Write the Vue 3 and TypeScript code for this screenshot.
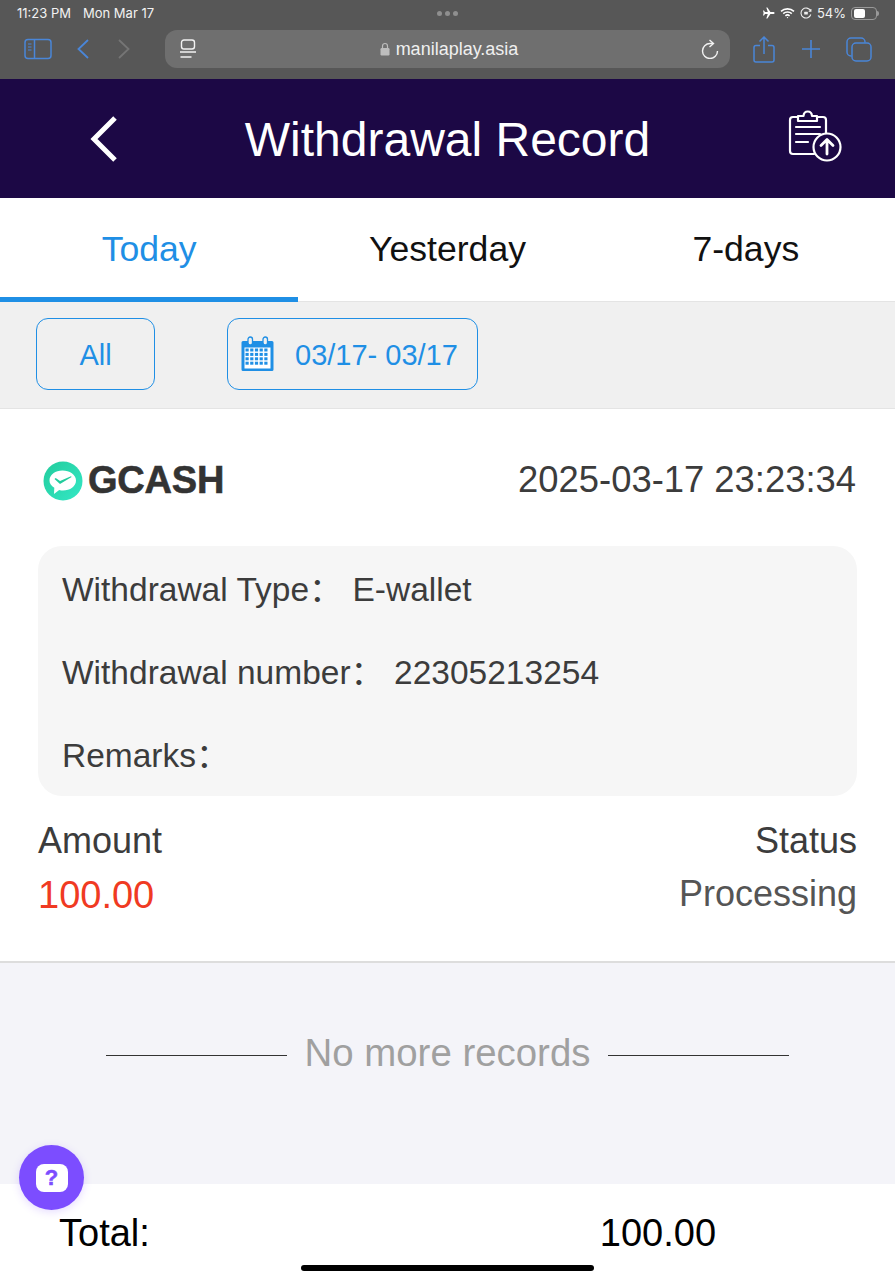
<script setup lang="ts">
const tabs = ["Today", "Yesterday", "7-days"];
const activeTab = 0;
const calendarCells = [0, 1, 2, 3].flatMap((row) => [0, 1, 2, 3, 4].map((col) => ({ x: 4.5 + col * 4.7, y: 12.5 + row * 4.4 })));
</script>

<template>
  <div class="page">
    <div class="browser">
      <div class="status">
        <div class="status-left">
          <span>11:23 PM</span>
          <span>Mon Mar 17</span>
        </div>
        <div class="dots"><i></i><i></i><i></i></div>
        <div class="status-right">
          <svg width="13" height="12" viewBox="0 0 13 12"><path d="M12.6 6c0-.6-.8-1-1.500-1H8.400L5.400.4H4.300L5.800 5H3L2 3.600H1l.6 2.400L1 8.400h1L3 7h2.800L4.300 11.600h1.100L8.400 7h2.700c.7 0 1.500-.4 1.500-1z" fill="#fff" /></svg>
          <svg width="15" height="12" viewBox="0 0 15 12" fill="none" stroke="#fff" stroke-width="1.600"><path d="M1 4.300c3.600-3.300 9.400-3.300 13 0M3.200 6.600c2.400-2.100 6.200-2.100 8.600 0M5.400 8.800c1.200-1 3-1 4.200 0" /><circle cx="7.500" cy="10.600" r=".7" fill="#fff" stroke="none" /></svg>
          <svg width="12" height="12" viewBox="0 0 12 12" fill="none" stroke="#eee" stroke-width="1.100"><path d="M10.800 7.500A5 5 0 1 1 10.500 3.800M10.900 2v2.200H8.700" /><rect x="4.200" y="4.700" width="3.600" height="2.800" rx=".5" fill="#eee" stroke="none" /></svg>
          <span class="battery-text">54%</span>
          <div class="battery"><b></b></div>
        </div>
      </div>
      <div class="toolbar">
        <div class="tools-left">
          <svg width="28" height="22" viewBox="0 0 28 22" fill="none" stroke="#4a86d8" stroke-width="1.500"><rect x="1" y="1.500" width="26" height="19" rx="3" /><path d="M10.500 1.500v19" /><path d="M4 6h3.500M4 9h3.500M4 12h3.500" stroke-width="1.100" /></svg>
          <svg class="chev" width="14" height="22" viewBox="0 0 14 22" fill="none" stroke="#4a86d8" stroke-width="1.800"><path d="M12 2 2.500 11l9.500 9" /></svg>
          <svg class="chev next" width="14" height="22" viewBox="0 0 14 22" fill="none" stroke="#757575" stroke-width="1.800"><path d="M2 2l9.500 9L2 20" /></svg>
        </div>
        <div class="address">
          <svg width="18" height="20" viewBox="0 0 18 20" fill="none" stroke="#f2f2f2" stroke-width="1.400"><rect x="2.500" y="1" width="13" height="9" rx="2.500" /><path d="M1 13h16M1.500 18h11" /></svg>
          <div class="url">
            <svg width="10" height="14" viewBox="0 0 10 14"><path d="M2.500 6V4a2.500 2.500 0 0 1 5 0v2" fill="none" stroke="#bdbdbd" stroke-width="1.200" /><rect x=".5" y="6" width="9" height="7.500" rx="1.200" fill="#bdbdbd" /></svg>
            <span>manilaplay.asia</span>
          </div>
          <svg width="18" height="20" viewBox="0 0 18 20" fill="none" stroke="#f2f2f2" stroke-width="1.400"><path d="M12 4.500H9A7.500 7.500 0 1 0 16.500 12" /><path d="M8.500 1l4 3.500-4 3.500" /></svg>
        </div>
        <div class="tools-right">
          <svg width="22" height="27" viewBox="0 0 22 27" fill="none" stroke="#4a86d8" stroke-width="1.500"><path d="M7 9.500H3a2 2 0 0 0-2 2V24a2 2 0 0 0 2 2h16a2 2 0 0 0 2-2V11.500a2 2 0 0 0-2-2h-4" /><path d="M11 18V1.500M6.500 5.500 11 1l4.500 4.500" /></svg>
          <svg width="20" height="20" viewBox="0 0 20 20" fill="none" stroke="#4a86d8" stroke-width="1.600"><path d="M10 1v18M1 10h18" /></svg>
          <svg width="26" height="25" viewBox="0 0 26 25" fill="none" stroke="#4a86d8" stroke-width="1.500"><path d="M5.500 19H5a4 4 0 0 1-4-4V5a4 4 0 0 1 4-4h10a4 4 0 0 1 4 4v.5" /><rect x="6" y="6" width="19" height="18" rx="4" /></svg>
        </div>
      </div>
    </div>

    <header class="head">
      <svg class="back" width="30" height="46" viewBox="0 0 30 46" fill="none" stroke="#fff" stroke-width="5"><path d="M26 2 5 23l21 21" /></svg>
      <h1>Withdrawal Record</h1>
      <svg class="upload" width="54" height="54" viewBox="0 0 54 54" fill="none" stroke="#fff" stroke-width="2.200" stroke-linecap="round" stroke-linejoin="round">
        <path d="M26 45H5a3 3 0 0 1-3-3V11a3 3 0 0 1 3-3h5M29 8h6a3 3 0 0 1 3 3v13" />
        <path d="M10 12V7h5.500c.5-6 8-6 8.500 0h5v5z" />
        <path d="M8 18h24M8 25h24M8 33h12" />
        <circle cx="39" cy="38" r="13.500" />
        <path d="M39 45V31M33 36.500l6-6 6 6" stroke-width="2.800" />
      </svg>
    </header>

    <nav class="tabs">
      <div v-for="(tab, i) in tabs" :key="tab" class="tab" :class="{ active: i === activeTab }">{{ tab }}</div>
    </nav>

    <section class="filters">
      <div class="pill all">All</div>
      <div class="pill range">
        <svg width="33" height="36" viewBox="0 0 33 36">
          <path d="M2 5h29a1.500 1.500 0 0 1 1.500 1.500v27A1.500 1.500 0 0 1 31 35H2a1.500 1.500 0 0 1-1.500-1.500v-27A1.500 1.500 0 0 1 2 5z" fill="#1f8fe5" />
          <rect x="3.500" y="11.500" width="26" height="21" fill="#fff" />
          <rect v-for="(c, i) in calendarCells" :key="i" :x="c.x" :y="c.y" width="3.200" height="3" fill="#1f8fe5" />
          <rect x="7" y="1" width="4.500" height="8" rx="2.200" fill="#f0f0f0" stroke="#1f8fe5" stroke-width="1.300" />
          <rect x="22" y="1" width="4.500" height="8" rx="2.200" fill="#f0f0f0" stroke="#1f8fe5" stroke-width="1.300" />
        </svg>
        <span>03/17- 03/17</span>
      </div>
    </section>

    <section class="record">
      <div class="record-top">
        <div class="brand">
          <svg width="40" height="40" viewBox="0 0 40 40">
            <defs>
              <linearGradient id="gcash" x1="0" y1="0" x2="1" y2="1">
                <stop offset="0" stop-color="#22cc9c" />
                <stop offset="1" stop-color="#34e8c6" />
              </linearGradient>
            </defs>
            <circle cx="20" cy="20" r="19.500" fill="url(#gcash)" />
            <path d="M6.500 19.500C6.500 13.500 12.500 9.500 19.500 9.500S33 13.500 33 19.500 27 29.500 20 29.500c-1.300 0-2.600-.1-3.800-.5L11 33l.3-6.300C8.200 25 6.500 22.500 6.500 19.500z" fill="#fff" />
            <path d="M11.500 18l1.200-1 4.300 3 11-4.800.6.800-11.600 7z" fill="#22cc9c" />
          </svg>
          <span>GCASH</span>
        </div>
        <div class="time">2025-03-17 23:23:34</div>
      </div>

      <div class="details">
        <div class="line">Withdrawal Type：<span class="val">E-wallet</span></div>
        <div class="line">Withdrawal number：<span class="val">22305213254</span></div>
        <div class="line">Remarks：</div>
      </div>

      <div class="summary">
        <div>
          <div class="label">Amount</div>
          <div class="amount">100.00</div>
        </div>
        <div class="right">
          <div class="label">Status</div>
          <div class="state">Processing</div>
        </div>
      </div>
    </section>

    <section class="nomore">
      <i></i>
      <span>No more records</span>
      <i></i>
    </section>

    <footer class="total">
      <span>Total:</span>
      <span class="total-num">100.00</span>
      <div class="help">
        <div class="help-box">?</div>
      </div>
      <div class="home-bar"></div>
    </footer>
  </div>
</template>

<style>
html,
body {
  margin: 0;
  background: #fff;
}
</style>

<style scoped>
.page {
  width: 895px;
  height: 1280px;
  overflow: hidden;
  display: flex;
  flex-direction: column;
  font-family: "Liberation Sans", Arial, "Noto Sans CJK SC", sans-serif;
  color: #3c3c3c;
}

.browser {
  height: 79px;
  box-sizing: border-box;
  background: #575757;
  color: #f2f2f2;
}

.status {
  height: 26px;
  padding: 0 17px;
  display: flex;
  align-items: center;
  justify-content: space-between;
  font-size: 13px;
  font-family: Inter, "Liberation Sans", sans-serif;
}

.status-left {
  display: flex;
  gap: 12px;
  width: 300px;
}

.dots {
  display: flex;
  gap: 3px;
}

.dots i {
  width: 5px;
  height: 5px;
  border-radius: 50%;
  background: #8f8f8f;
}

.status-right {
  width: 300px;
  display: flex;
  justify-content: flex-end;
  align-items: center;
  gap: 5px;
}

.battery-text {
  font-size: 13px;
}

.battery {
  position: relative;
  width: 26px;
  height: 13px;
  box-sizing: border-box;
  border: 1px solid #999;
  border-radius: 4px;
  padding: 1px 2px;
  margin-right: 1px;
}

.battery::after {
  content: "";
  position: absolute;
  right: -3px;
  top: 3px;
  width: 2px;
  height: 5px;
  background: #999;
  border-radius: 0 2px 2px 0;
}

.battery b {
  display: block;
  width: 11px;
  height: 9px;
  background: #fff;
  border-radius: 2px;
}

.toolbar {
  height: 53px;
  display: flex;
  align-items: flex-start;
  padding: 4px 23px 0 24px;
}

.tools-left {
  width: 141px;
  height: 38px;
  display: flex;
  align-items: center;
}

.chev {
  margin-left: 24px;
}

.next {
  margin-left: 27px;
}

.address {
  width: 565px;
  height: 38px;
  box-sizing: border-box;
  border-radius: 12px;
  background: #6f6f6f;
  display: flex;
  align-items: center;
  justify-content: space-between;
  padding: 0 11px 0 14px;
}

.url {
  display: flex;
  align-items: center;
  gap: 6px;
  font-size: 18px;
  color: #f0f0f0;
}

.tools-right {
  flex: 1;
  height: 38px;
  display: flex;
  align-items: center;
  justify-content: space-between;
  padding-left: 23px;
}

.head {
  height: 119px;
  background: #1c0845;
  position: relative;
  display: flex;
  align-items: center;
  justify-content: center;
}

.head h1 {
  margin: 0;
  padding-top: 2px;
  font-size: 48px;
  font-weight: 400;
  color: #fff;
}

.back {
  position: absolute;
  left: 89px;
  top: 37px;
}

.upload {
  position: absolute;
  left: 788px;
  top: 30px;
}

.tabs {
  height: 104px;
  display: flex;
  background: #fff;
  box-sizing: border-box;
}

.tab {
  flex: 1;
  box-sizing: border-box;
  height: 104px;
  text-align: center;
  padding-top: 31px;
  font-size: 35.600px;
  color: #111;
  border-bottom: 1px solid #e4e4e4;
}

.tab.active {
  color: #1f8fe5;
  border-bottom: 5px solid #1f8fe5;
}

.filters {
  height: 107px;
  box-sizing: border-box;
  background: #f0f0f0;
  border-bottom: 1px solid #e4e4e4;
  display: flex;
  align-items: flex-start;
  gap: 72px;
  padding: 16px 0 0 36px;
}

.pill {
  height: 72px;
  box-sizing: border-box;
  border: 1px solid #1f8fe5;
  border-radius: 12px;
  color: #1f8fe5;
  font-size: 29px;
  display: flex;
  align-items: center;
  justify-content: center;
  padding-top: 2px;
}

.all {
  width: 119px;
}

.range {
  width: 251px;
  gap: 21px;
  justify-content: flex-start;
  padding-left: 13px;
  padding-top: 0;
}

.range span {
  padding-top: 2px;
}

.record {
  height: 554px;
  box-sizing: border-box;
  background: #fff;
  border-bottom: 2px solid #ddd;
  padding: 0 38px;
}

.record-top {
  height: 137px;
  box-sizing: border-box;
  display: flex;
  align-items: flex-start;
  justify-content: space-between;
  padding-top: 50px;
}

.brand {
  display: flex;
  align-items: center;
  gap: 5px;
  margin-left: 5px;
  font-size: 38px;
  font-weight: 700;
  color: #333;
  -webkit-text-stroke: 0.6px #333;
  letter-spacing: -0.2px;
}

.time {
  font-size: 36.400px;
  line-height: 42px;
  margin-right: 1px;
}

.details {
  height: 250px;
  box-sizing: border-box;
  background: #f6f6f6;
  border-radius: 24px;
  padding: 1px 24px 0;
  font-size: 33.500px;
}

.line {
  height: 83px;
  line-height: 85px;
}

.val {
  margin-left: 10px;
}

.summary {
  display: flex;
  justify-content: space-between;
  margin-top: 23px;
  font-size: 36px;
}

.right {
  text-align: right;
}

.label {
  line-height: 44px;
}

.amount {
  margin-top: 10px;
  line-height: 44px;
  font-size: 38px;
  color: #f03a22;
}

.state {
  margin-top: 9px;
  line-height: 44px;
  color: #555;
}

.nomore {
  height: 221px;
  box-sizing: border-box;
  background: #f4f4f9;
  display: flex;
  justify-content: center;
  align-items: flex-start;
  gap: 18px;
  padding-top: 68px;
  font-size: 38.400px;
  color: #a0a0a0;
}

.nomore i {
  width: 181px;
  height: 1px;
  background: #333;
  margin-top: 24px;
}

.total {
  flex: 1;
  position: relative;
  background: #fff;
  color: #000;
  font-size: 38px;
  display: flex;
  padding: 28px 0 0 59px;
}

.total-num {
  margin-left: 450px;
}

.help {
  position: absolute;
  left: 19px;
  top: -39px;
  width: 65px;
  height: 65px;
  border-radius: 50%;
  background: #7c4dff;
  box-shadow: 0 2px 8px rgba(124, 77, 255, 0.2);
  display: flex;
  align-items: center;
  justify-content: center;
}

.help-box {
  width: 32px;
  height: 28px;
  border-radius: 8px;
  background: #fff;
  color: #7c4dff;
  font-size: 22px;
  font-weight: 700;
  line-height: 28px;
  text-align: center;
  -webkit-text-stroke: 0.5px #7c4dff;
}

.home-bar {
  position: absolute;
  left: 301px;
  top: 81px;
  width: 293px;
  height: 6px;
  border-radius: 3px;
  background: #000;
}
</style>
